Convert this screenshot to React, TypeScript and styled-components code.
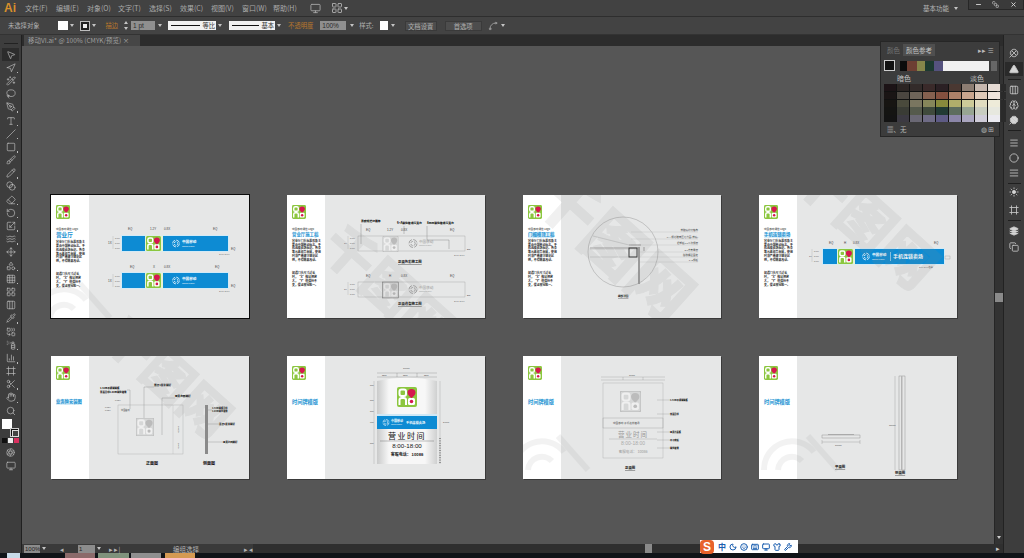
import React from "react";
import styled, { createGlobalStyle } from "styled-components";
import {
  MousePointer2, Navigation, Wand2, Lasso, PenTool, Type, Slash, Square, Brush, Pencil, Blend, Eraser,
  RotateCcw, Scaling, Waves, Move, Shapes, Grid3x3, LayoutGrid, Pipette, Combine, SprayCan, BarChart3,
  Frame, Scissors, Hand, Search, Aperture, Triangle, Columns3, Brain, Spline, Menu, Circle, Layers, Copy,
  Clover, Sun, AlignJustify, Minus, X, SquareStack, Monitor, Shirt, Wrench, Moon, Smile, Keyboard,
} from "lucide-react";

const GlobalStyle = createGlobalStyle`
  html, body { margin: 0; padding: 0; background: #333; }
  body { font-family: "Noto Sans CJK SC", "Liberation Sans", sans-serif; overflow: hidden; }
  * { box-sizing: border-box; }
`;

const Page = styled.div`
  position: relative;
  width: 1024px;
  height: 558px;
  display: flex;
  flex-direction: column;
  overflow: hidden;
  color: #b9b9b9;
  font-size: 6.3px;
`;

/* top menu */
const MenuBar = styled.div`
  height: 17px;
  flex: none;
  display: flex;
  align-items: center;
  padding-left: 4px;
  background: #424242;
  border-bottom: 1px solid #2e2e2e;
`;
const AiLogo = styled.div`
  width: 21px;
  font: bold 12px "Liberation Sans", sans-serif;
  color: #d8902c;
`;
const MenuItem = styled.span`
  width: 31px;
  font-size: 7px;
  white-space: nowrap;
  color: #a9a9a9;
`;
const MenuIcon = styled.div<{ $ml: number }>`
  margin-left: ${(p) => p.$ml}px;
  display: flex;
  align-items: center;
  color: #a5a5a5;
`;
const Workspace = styled.span`
  margin-left: auto;
  margin-right: 2px;
  font-size: 6.5px;
  color: #b5b5b5;
`;
const WinButtons = styled.div`
  margin-left: 10px;
  width: 56px;
  height: 10px;
  align-self: flex-start;
  display: flex;
  background: #3a3a3a;
  border: 1px solid #272727;
  border-top: 0;
`;
const WinButton = styled.div<{ $w: number }>`
  width: ${(p) => p.$w}px;
  display: flex;
  align-items: center;
  justify-content: center;
  color: #dcdcdc;
`;

/* control bar */
const ControlBar = styled.div`
  height: 18px;
  flex: none;
  display: flex;
  align-items: center;
  padding-left: 8px;
  background: #434343;
  border-bottom: 1px solid #333;
`;
const Ctl = styled.span<{ $ml?: number; $hot?: boolean }>`
  margin-left: ${(p) => p.$ml ?? 0}px;
  white-space: nowrap;
  color: ${(p) => (p.$hot ? "#b9772c" : "#b0b0b0")};
`;
const Swatch = styled.div<{ $ml: number; $w: number }>`
  margin-left: ${(p) => p.$ml}px;
  width: ${(p) => p.$w}px;
  height: 9px;
  background: #fff;
`;
const StrokeBox = styled.div<{ $ml: number }>`
  margin-left: ${(p) => p.$ml}px;
  width: 10px;
  height: 10px;
  background: #222;
  border: 1px solid #bdbdbd;
  display: flex;
  align-items: center;
  justify-content: center;
  &::after { content: ""; width: 4px; height: 4px; background: #eee; border: 1px solid #222; }
`;
const Arrow = styled.span<{ $ml: number }>`
  margin-left: ${(p) => p.$ml}px;
  width: 0;
  height: 0;
  border: 2px solid transparent;
  border-top: 3px solid #c4c4c4;
  border-bottom: 0;
  flex: none;
`;
const Spinner = styled.div<{ $ml: number }>`
  margin-left: ${(p) => p.$ml}px;
  width: 5px;
  height: 9px;
  display: flex;
  flex-direction: column;
  justify-content: space-between;
  align-items: center;
  &::before { content: ""; border: 2.5px solid transparent; border-bottom: 3px solid #c4c4c4; border-top: 0; }
  &::after { content: ""; border: 2.5px solid transparent; border-top: 3px solid #c4c4c4; border-bottom: 0; }
`;
const Field = styled.div<{ $ml: number; $w: number }>`
  margin-left: ${(p) => p.$ml}px;
  width: ${(p) => p.$w}px;
  height: 9px;
  padding-left: 2px;
  font: 6.5px/9px "Liberation Sans", sans-serif;
  background: #8f8f8f;
  color: #2b2b2b;
`;
const StrokeField = styled.div<{ $ml: number; $w: number }>`
  margin-left: ${(p) => p.$ml}px;
  width: ${(p) => p.$w}px;
  height: 9px;
  padding: 0 1px 0 3px;
  display: flex;
  align-items: center;
  gap: 2px;
  background: #f1f1f1;
  color: #333;
  &::before { content: ""; flex: 1; height: 1px; background: #111; }
`;
const CtlButton = styled.div<{ $ml: number; $w: number }>`
  margin-left: ${(p) => p.$ml}px;
  width: ${(p) => p.$w}px;
  height: 10px;
  line-height: 9px;
  text-align: center;
  background: #4d4d4d;
  border: 1px solid #3a3a3a;
  color: #b0b0b0;
`;
const Main = styled.div`
  position: relative;
  flex: 1;
  min-height: 0;
  display: flex;
  background: #2b2b2b;
`;

/* tools */
const ToolBar = styled.div`
  width: 22px;
  flex: none;
  padding-top: 13px;
  display: flex;
  flex-direction: column;
  align-items: center;
  background: #3d3d3d;
  border-right: 1px solid #202020;
`;
const ToolRule = styled.div`
  width: 14px;
  height: 1px;
  margin: -5px 0 4px;
  flex: none;
  background: #222;
`;
const Tool = styled.div<{ $more?: boolean; $on?: boolean }>`
  position: relative;
  width: 17px;
  height: 13.2px;
  flex: none;
  display: flex;
  align-items: center;
  justify-content: center;
  color: #c0c0c0;
  background: ${(p) => (p.$on ? "#2c2c2c" : "transparent")};
  &::after {
    content: "";
    display: ${(p) => (p.$more ? "block" : "none")};
    position: absolute;
    right: 1px;
    bottom: 1px;
    width: 1.5px;
    height: 1.5px;
    background: #bbb;
  }
`;
const FillStroke = styled.div`
  position: relative;
  width: 18px;
  height: 18px;
  margin-top: 2px;
  flex: none;
`;
const FillBox = styled.div`
  width: 10px;
  height: 10px;
  background: #fff;
`;
const StrokeOver = styled.div`
  position: absolute;
  right: 1px;
  bottom: 0;
  width: 9px;
  height: 9px;
  background: #111;
  border: 1px solid #ccc;
  &::after { content: ""; display: block; margin: 1px; width: 5px; height: 5px; background: #444; border: 1px solid #ddd; }
`;
const MiniRow = styled.div`
  display: flex;
  gap: 1px;
  margin-top: 1px;
  margin-bottom: 3px;
  flex: none;
`;
const Mini = styled.div<{ $c: string }>`
  width: 5px;
  height: 5px;
  background: ${(p) => p.$c};
`;

const Center = styled.div`
  flex: 1;
  min-width: 0;
  display: flex;
  flex-direction: column;
`;
const TabRow = styled.div`
  height: 11px;
  flex: none;
  display: flex;
  padding-left: 2px;
  background: #2c2c2c;
`;
const DocTab = styled.div`
  width: 116px;
  padding-left: 4px;
  font-size: 6.5px;
  line-height: 11px;
  white-space: nowrap;
  background: #464646;
  color: #a0a0a0;
`;
const CanvasRow = styled.div`
  height: 498px;
  flex: none;
  display: flex;
`;
const Canvas = styled.div`
  position: relative;
  flex: 1;
  padding: 149px 0 0 29px;
  display: grid;
  grid-template-columns: repeat(4, 198px);
  grid-template-rows: repeat(2, 123px);
  column-gap: 38px;
  row-gap: 38px;
  background: #565656;
  overflow: hidden;
`;
const VScroll = styled.div`
  position: relative;
  width: 9px;
  flex: none;
  background: #333;
  border-left: 1px solid #262626;
`;
const VThumb = styled.div`
  position: absolute;
  top: 247px;
  left: 0;
  width: 8px;
  height: 9px;
  background: #8a8a8a;
`;
const VArrow = styled.div`
  position: absolute;
  left: 2px;
  bottom: 5px;
  border: 2px solid transparent;
  border-top: 3px solid #ccc;
  border-bottom: 0;
`;
const StatusBar = styled.div`
  height: 9px;
  flex: none;
  display: flex;
  align-items: center;
  background: #3a3a3a;
  font-size: 6.5px;
`;
const StatusField = styled.div<{ $ml: number; $w: number }>`
  margin-left: ${(p) => p.$ml}px;
  width: ${(p) => p.$w}px;
  height: 8px;
  padding-left: 1px;
  font: 6px/8px "Liberation Sans", sans-serif;
  background: #8c8c8c;
  color: #222;
`;
const StatusText = styled.span<{ $ml: number; $w: number }>`
  margin-left: ${(p) => p.$ml}px;
  width: ${(p) => p.$w}px;
  flex: none;
  white-space: nowrap;
  color: #b5b5b5;
`;
const HScroll = styled.div`
  position: relative;
  flex: 1;
  height: 9px;
  background: #2f2f2f;
  color: #ccc;
  line-height: 9px;
  text-align: right;
  padding-right: 3px;
`;
const HThumb = styled.div`
  position: absolute;
  left: 392px;
  top: 0;
  width: 7px;
  height: 9px;
  background: #8a8a8a;
`;

/* dock */
const Dock = styled.div`
  width: 21px;
  flex: none;
  padding-top: 11px;
  display: flex;
  flex-direction: column;
  align-items: center;
  background: #3d3d3d;
  border-left: 1px solid #222;
`;
const DockIcon = styled.div<{ $mt?: number; $on?: boolean }>`
  margin-top: ${(p) => p.$mt ?? 0}px;
  width: 18px;
  height: 14px;
  flex: none;
  display: flex;
  align-items: center;
  justify-content: center;
  color: #c8c8c8;
  background: ${(p) => (p.$on ? "#2a2a2a" : "transparent")};
`;
const DockRule = styled.div`
  margin-top: 3px;
  width: 13px;
  height: 1px;
  flex: none;
  background: #1f1f1f;
`;

/* colour guide panel */
const Panel = styled.div`
  position: absolute;
  top: 6px;
  right: 24px;
  width: 120px;
  height: 96px;
  padding: 2px 2px 0 3px;
  display: flex;
  flex-direction: column;
  background: #3c3c3c;
  border: 1px solid #262626;
`;
const PanelTabs = styled.div`
  height: 12px;
  flex: none;
  display: flex;
  align-items: center;
  font-size: 6.5px;
  color: #777;
`;
const PanelTab = styled.div<{ $on?: boolean }>`
  padding: 0 3px;
  height: 12px;
  line-height: 12px;
  background: ${(p) => (p.$on ? "#4f4f4f" : "transparent")};
  color: ${(p) => (p.$on ? "#c6c6c6" : "#767676")};
`;
const PanelRight = styled.span`
  margin-left: auto;
  margin-right: 3px;
  color: #bbb;
`;
const GuideRow = styled.div`
  margin-top: 3px;
  height: 13px;
  flex: none;
  display: flex;
  align-items: center;
`;
const BaseSwatch = styled.div`
  width: 11px;
  height: 11px;
  background: #111;
  border: 1px solid #ccc;
`;
const GuideBar = styled.div`
  margin-left: 5px;
  width: 92px;
  height: 10px;
  display: flex;
  background: #f1f1f1;
`;
const GuideCell = styled.div<{ $c: string; $w: number }>`
  width: ${(p) => p.$w}px;
  background: ${(p) => p.$c};
`;
const GuideMenu = styled.div`
  margin-left: 2px;
  width: 6px;
  height: 10px;
  background: #666;
`;
const ShadeLabels = styled.div`
  height: 12px;
  flex: none;
  font-size: 7px;
  padding: 0 13px 0 13px;
  display: flex;
  align-items: center;
  justify-content: space-between;
  color: #c4c4c4;
`;
const ShadeGrid = styled.div`
  display: grid;
  grid-template-columns: repeat(9, 12.4px) 5px;
  grid-auto-rows: 7.2px;
  gap: 0.6px;
  background: #111;
  flex: none;
`;
const Shade = styled.div<{ $c: string }>`
  background: ${(p) => p.$c};
`;
const PanelFoot = styled.div`
  flex: 1;
  padding: 0 3px;
  display: flex;
  align-items: center;
  justify-content: space-between;
  font-size: 6.5px;
  color: #b5b5b5;
`;

/* artboards */
const Board = styled.div<{ $picked?: boolean }>`
  display: flex;
  overflow: hidden;
  background: #e6e7e7;
  box-shadow: ${(p) => (p.$picked ? "0 0 0 1px #0a0a0a" : "1px 1px 0 #3a3a3a")};
`;
const Side = styled.div`
  width: 38px;
  flex: none;
  padding: 10px 3px 0 5px;
  background: #fff;
`;
const SideLogo = styled.div`
  height: 14px;
  margin-bottom: 9px;
`;
const Eyebrow = styled.div`
  font-size: 2.6px;
  line-height: 3px;
  color: #222;
  white-space: nowrap;
`;
const BoardTitle = styled.div<{ $size: number; $gap?: number; $mark?: boolean }>`
  display: table;
  margin-top: ${(p) => p.$gap ?? 1}px;
  font-size: ${(p) => p.$size}px;
  line-height: ${(p) => p.$size + 1.2}px;
  font-weight: 700;
  color: #1b92d2;
  white-space: nowrap;
  background: ${(p) => (p.$mark ? "#d9eef9" : "transparent")};
`;
const Para = styled.p`
  margin: 2px 0 9px;
  font-size: 2.9px;
  line-height: 3.9px;
  font-weight: 700;
  color: #222;
`;
const Plot = styled.svg`
  flex: 1;
  min-width: 0;
  height: 123px;
  display: block;
`;
const Dim = styled.text<{ $s?: number }>`
  font-family: "Liberation Sans", "Noto Sans CJK SC", sans-serif;
  font-size: ${(p) => p.$s ?? 3}px;
  fill: #444;
`;
const Callout = styled.text<{ $s?: number }>`
  font-family: "Noto Sans CJK SC", sans-serif;
  font-size: ${(p) => p.$s ?? 3}px;
  font-weight: 900;
  fill: #111;
`;
const Caption = styled.text<{ $s?: number; $plain?: boolean }>`
  font-family: "Noto Sans CJK SC", sans-serif;
  font-size: ${(p) => p.$s ?? 4}px;
  font-weight: 700;
  fill: #111;
  text-decoration: ${(p) => (p.$plain ? "none" : "underline")};
`;
const Overlay = styled.svg`
  position: absolute;
  inset: 0;
  width: 100%;
  height: 100%;
  pointer-events: none;
`;
const Mark = styled.text<{ $s: number }>`
  font-family: "Noto Sans CJK SC", sans-serif;
  font-size: ${(p) => p.$s}px;
  font-weight: 900;
  fill: #8c8c8c;
  stroke: #8c8c8c;
  stroke-width: 1;
  opacity: 0.13;
`;

/* bottom */
const TaskBar = styled.div`
  height: 5px;
  flex: none;
  display: flex;
  background: #101418;
`;
const TaskThumb = styled.div<{ $ml: number; $w: number; $c: string }>`
  margin-left: ${(p) => p.$ml}px;
  width: ${(p) => p.$w}px;
  background: ${(p) => p.$c};
`;
const Ime = styled.div`
  position: absolute;
  left: 700px;
  bottom: 5px;
  width: 98px;
  height: 13px;
  display: flex;
  align-items: center;
  gap: 3px;
  padding-right: 2px;
  background: #fff;
  color: #1c5fb0;
  font-size: 8px;
  font-weight: 700;
`;
const ImeLogo = styled.div`
  width: 14px;
  height: 14px;
  margin-right: 1px;
  flex: none;
  text-align: center;
  font: bold 12px/14px "Liberation Sans", sans-serif;
  color: #fff;
  background: #e8622a;
  border-radius: 4px;
`;

const S = 10;
const toolsTop = [
  [MousePointer2, 0, 1], [Navigation, 1], [Wand2], [Lasso], [PenTool, 1], [Type, 1], [Slash, 1], [Square, 1],
  [Brush], [Pencil, 1], [Blend], [Eraser, 1], [RotateCcw, 1], [Scaling, 1], [Waves, 1], [Move], [Shapes, 1],
  [Grid3x3, 1], [LayoutGrid], [Columns3], [Pipette, 1], [Combine], [SprayCan, 1], [BarChart3, 1], [Frame],
  [Scissors, 1], [Hand, 1], [Search],
] as [React.ComponentType<{ size: number; strokeWidth: number }>, number?, number?][];

const menus = ["文件(F)", "编辑(E)", "对象(O)", "文字(T)", "选择(S)", "效果(C)", "视图(V)", "窗口(W)", "帮助(H)"];

const shades = [
  ["#1c1316", "#2b2523", "#332b2a", "#3a2a2a", "#2b2024", "#4a3832", "#8d7d72", "#c7b7ae", "#e6dbd4", "#2a2a2a"],
  ["#1a1515", "#4b4640", "#6f6459", "#85604f", "#84503f", "#ad8169", "#c9a58e", "#dfc9b8", "#efe4dc", "#2a2a2a"],
  ["#171512", "#4a4a3c", "#7a7660", "#86865a", "#888a3c", "#b0ae6b", "#cdcb99", "#e0dcc0", "#eeebd9", "#2a2a2a"],
  ["#141412", "#3a3c35", "#555a4c", "#3f4a3c", "#213a33", "#5d6d5e", "#97a592", "#c8cdc0", "#e7e8df", "#2a2a2a"],
  ["#131313", "#3c3a42", "#6a6874", "#6f6c86", "#5e5b85", "#8b86a8", "#aaa6bf", "#cfccd8", "#ecebf0", "#2a2a2a"],
];

const guide = [
  ["#0c0c0c", 7], ["#6d3f33", 10], ["#85864a", 8], ["#1d3a30", 9], ["#55527e", 9],
] as [string, number][];

// green brand tile, mono = the grey outline version on the construction boards
function Logo(props: { x?: number; y?: number; size: number; mono?: boolean }) {
  const { x = 0, y = 0, size, mono } = props;
  const bg = mono ? "#d6d7d7" : "#8cc63f";
  const red = mono ? "#bcbcbc" : "#d6174f";
  const fg = mono ? "#efefef" : "#fff";
  return (
    <svg x={x} y={y} width={size} height={size} viewBox="0 0 40 40" display="block">
      <rect width="40" height="40" rx="4" fill={bg} stroke={mono ? "#999" : "none"} />
      <rect x="5" y="5" width="13" height="13" rx="4" fill="none" stroke={fg} strokeWidth="4" />
      <path d="M29 4c5 0 8 3 8 7 0 5-5 8-8 12-3-4-8-7-8-12 0-4 3-7 8-7z" fill={red} />
      <path d="M5 36V26q0-4 5-4h3q5 0 5 4v10" fill="none" stroke={fg} strokeWidth="4" />
      <rect x="22" y="22" width="14" height="14" rx="3" fill={fg} />
      <circle cx="29" cy="29" r="3.5" fill={red} />
    </svg>
  );
}

function MobileMark(props: { x: number; y: number; r: number; c?: string }) {
  const { x, y, r, c = "#fff" } = props;
  return (
    <g fill="none" stroke={c} strokeWidth={r * 0.22}>
      <circle cx={x} cy={y} r={r} strokeDasharray={`${r * 1.2} ${r * 0.35}`} />
      <circle cx={x} cy={y} r={r * 0.55} strokeDasharray={`${r * 0.6} ${r * 0.25}`} />
    </g>
  );
}

function BlueBar(props: { x: number; y: number; w: number; h: number; logoX: number; markX: number; wide?: boolean }) {
  const { x, y, w, h, logoX, markX, wide } = props;
  return (
    <g>
      <rect x={x - 1} y={y - 1} width={w + 2} height={h + 2} fill="#d3eaf6" />
      <rect x={x} y={y} width={w} height={h} fill="#0d8bd3" />
      <rect x={logoX - 1} y={y - 0.5} width="18" height={h + 1} fill="#e9f3d5" />
      <Logo x={logoX} y={y} size={h} />
      <MobileMark x={markX} y={y + h / 2} r={3.4} />
      <text x={markX + 6} y={y + h / 2 - 0.2} fontSize="3.6" fontWeight="700" fill="#fff" fontFamily="Noto Sans CJK SC">中国移动</text>
      <text x={markX + 6} y={y + h / 2 + 3} fontSize="2.2" fill="#fff" fontFamily="Liberation Sans">China Mobile</text>
      {wide && <rect x={markX + 24} y={y + 3} width="0.5" height={h - 6} fill="#fff" />}
      {wide && <text x={markX + 27} y={y + h / 2 + 1.5} fontSize="5" fontWeight="700" fill="#fff" fontFamily="Noto Sans CJK SC">手机连锁卖场</text>}
    </g>
  );
}

function SizeMarks(props: { x: number; y: number; labels: string[]; step: number }) {
  return (
    <g>
      {props.labels.map((t, i) => (
        <Dim key={i} x={props.x} y={props.y + i * props.step} $s={2.4}>{t}</Dim>
      ))}
      <line x1={props.x - 2} x2={props.x - 2} y1={props.y - 3} y2={props.y + props.step * (props.labels.length - 1)} stroke="#888" strokeWidth="0.25" />
    </g>
  );
}

function Hall() {
  return (
    <Plot viewBox="38 0 160 123">
      <Dim x="77" y="35">EQ</Dim><Dim x="99" y="35">1.2Y</Dim><Dim x="113" y="35">0.8X</Dim><Dim x="162" y="35">EQ</Dim>
      <SizeMarks x="64" y={44} labels={["0.6X", "0.6X", "0.6X"]} step={5} />
      <Dim x="57" y="49">1X</Dim>
      <BlueBar x={71} y={41} w={106} h={15} logoX={95} markX={125} />
      <Dim x="180" y="55">EQ</Dim><Dim x="168" y="60" $s={2.4}>1/4X 1/4X</Dim>
      <Dim x="79" y="73">EQ</Dim><Dim x="102" y="73">X</Dim><Dim x="113" y="73">0.8X</Dim><Dim x="164" y="73">EQ</Dim>
      <SizeMarks x="64" y={82} labels={["0.6X", "0.6X", "0.6X"]} step={5} />
      <Dim x="57" y="87">1X</Dim>
      <BlueBar x={71} y={78} w={106} h={15} logoX={95} markX={125} />
      <Dim x="180" y="92">EQ</Dim><Dim x="168" y="97" $s={2.4}>1/4X 1/4X</Dim>
    </Plot>
  );
}

function HallBuild() {
  const strip = (y: number, framed?: boolean) => (
    <g>
      <rect x="71" y={y} width="107" height="15" fill="none" stroke="#8a8a8a" strokeWidth="0.3" />
      <Logo x={95.5} y={y} size={16} mono />
      {framed && <rect x="95.5" y={y} width="16" height="16" fill="none" stroke="#555" strokeWidth="0.4" />}
      <MobileMark x={126} y={y + 7.5} r={4} c="#9a9a9a" />
      <text x="132" y={y + 7} fontSize="3.6" fontFamily="Noto Sans CJK SC" fill="#9a9a9a">中国移动</text>
      <text x="132" y={y + 10} fontSize="2.2" fontFamily="Liberation Sans" fill="#9a9a9a">China Mobile</text>
      <SizeMarks x="63" y={y + 3} labels={["0.6X", "0.6X", "0.6X"]} step={5} />
      <Dim x="57" y={y + 8} $s={2.4}>1X</Dim>
      <Dim x="180" y={y + 14} $s={2.4}>EQ</Dim>
      <Dim x="167" y={y + 20} $s={2.4}>1/4X 1/4X</Dim>
    </g>
  );
  return (
    <Plot viewBox="38 0 160 123">
      <Callout x="74" y="27" $s={2.8}>背胶喷绘灯箱布</Callout>
      <Callout x="110" y="29" $s={2.8}>6+A钢化玻璃压克力</Callout>
      <Callout x="140" y="29" $s={2.8}>8mm钢化玻璃压克力</Callout>
      <path d="M74 29v20M117 31v8M140 31v14h22v9" fill="none" stroke="#555" strokeWidth="0.3" />
      <Dim x="79" y="36">EQ</Dim><Dim x="100" y="36">1.2Y</Dim><Dim x="114" y="36">0.8X</Dim><Dim x="163" y="36">EQ</Dim>
      {strip(41)}
      <Caption x="111" y="68" $s={3.4}>正面色彩施工图</Caption>
      <Dim x="79" y="82">EQ</Dim><Dim x="102" y="82">H</Dim><Dim x="114" y="82">0.8X</Dim><Dim x="163" y="82">EQ</Dim>
      {strip(87, true)}
      <Caption x="111" y="110" $s={3.4}>正面造型施工图</Caption>
    </Plot>
  );
}

function HeadDetail() {
  const notes = ["背胶喷绘灯箱布", "6+A钢化玻璃压克力面(背喷)", "铝塑板1:1二次钢架", "2.0方管骨架", "膨胀螺丝固定", "1+2钢板"];
  const ys = [36, 43, 49, 56, 61, 66];
  return (
    <Plot viewBox="38 0 160 123">
      <circle cx="100" cy="57" r="35" fill="none" stroke="#666" strokeWidth="0.3" />
      <path d="M70 41 106 50M67 54H116M67 62H114" fill="none" stroke="#888" strokeWidth="0.3" />
      <rect x="67" y="52" width="48" height="2" fill="#c4c4c4" />
      <rect x="106" y="53" width="8" height="9" fill="none" stroke="#222" strokeWidth="0.9" />
      <rect x="115" y="52" width="2" height="37" fill="#9a9a9a" />
      <path d="M106 50h12M121 52v4" stroke="#333" strokeWidth="0.4" />
      {notes.map((n, i) => (
        <g key={n}>
          <line x1={i < 3 ? 108 : 116} x2="175" y1={ys[i] + 1} y2={ys[i] + 1} stroke="#999" strokeWidth="0.2" />
          <Dim x="175" y={ys[i]} textAnchor="end" $s={2.5}>{n}</Dim>
        </g>
      ))}
      <Caption x="95" y="102" $s={2.6}>细部详图</Caption>
    </Plot>
  );
}

function PhoneShop() {
  return (
    <Plot viewBox="38 0 160 123">
      <Dim x="70" y="49">EQ</Dim><Dim x="85" y="49">H</Dim><Dim x="94" y="49">0.8X</Dim><Dim x="175" y="49">EQ</Dim>
      <SizeMarks x="55" y={57} labels={["0.6X", "0.6X", "0.6X"]} step={5} />
      <Dim x="50" y="62" $s={2.4}>1X</Dim>
      <BlueBar x={64} y={54} w={121} h={15} logoX={79} markX={107} wide />
      <Dim x="160" y="73" $s={2.2}>1/4X  1/4X色条</Dim>
      <rect x="186" y="61" width="5" height="3" fill="none" stroke="#888" strokeWidth="0.3" />
    </Plot>
  );
}

function SignFront() {
  return (
    <Plot viewBox="38 0 160 123">
      <Callout x="49" y="33" $s={2.4}>1.5cm不锈钢钢板</Callout>
      <Callout x="49" y="37" $s={2.4}>背面丝印1.0cm钢化玻璃</Callout>
      <Callout x="103" y="30" $s={2.6}>直径1厘米钢钉</Callout>
      <Callout x="124" y="41" $s={2.6}>亚克力四脚钉</Callout>
      <path d="M76 34h3v19M93 31h10M93 31v36M111 42h13M111 42v37" fill="none" stroke="#555" strokeWidth="0.25" />
      <Dim x="64" y="45" $s={2.2}>0.05X</Dim><Dim x="54" y="52" $s={2.2}>0.05X</Dim><Dim x="54" y="55" $s={2.2}>0.05X</Dim>
      <rect x="67" y="49" width="65" height="49" fill="none" stroke="#999" strokeWidth="0.3" />
      <line x1="122" x2="122" y1="49" y2="98" stroke="#999" strokeWidth="0.25" />
      <Logo x={85} y={62} size={18} mono />
      <Dim x="70" y="55" $s={2.2}>中国移动</Dim>
      <Dim x="127" y="70" transform="rotate(90 127 70)" $s={2.2}>100cm</Dim>
      <Dim x="127" y="87" transform="rotate(90 127 87)" $s={2.2}>50cm</Dim>
      <rect x="154" y="49" width="3" height="49" fill="#8a8a8a" />
      <Callout x="161" y="53" $s={2.2}>1.5cm钢板丝印</Callout>
      <Callout x="161" y="56" $s={2.2}>1.0cm钢化玻璃</Callout>
      <Callout x="168" y="69" $s={2.4}>直径1厘米钢钉</Callout>
      <Callout x="172" y="87" $s={2.4}>亚克力四脚钉</Callout>
      <path d="M157 54h4M157 68h11M157 86h15" stroke="#555" strokeWidth="0.25" />
      <Caption x="95" y="109" $plain>正面图</Caption>
      <Caption x="152" y="109" $plain>侧面图</Caption>
    </Plot>
  );
}

function HoursPlate() {
  return (
    <Plot viewBox="38 0 160 123">
      <defs>
        <linearGradient id="plate" x1="0" x2="1" y1="0" y2="0">
          <stop offset="0" stopColor="#c9caca" />
          <stop offset="0.2" stopColor="#f7f7f7" />
          <stop offset="0.8" stopColor="#f7f7f7" />
          <stop offset="1" stopColor="#cfd0d0" />
        </linearGradient>
      </defs>
      <path d="M90 25q30-7 60 0v83H90z" fill="url(#plate)" />
      <Dim x="116" y="13" $s={2.2}>100cm</Dim>
      <path d="M90 17H150M90 21H150M110 17v4M130 17v4" stroke="#555" strokeWidth="0.25" />
      <Dim x="95" y="20" $s={1.9}>33cm</Dim><Dim x="116" y="20" $s={1.9}>33cm</Dim><Dim x="137" y="20" $s={1.9}>33cm</Dim>
      <line x1="87" x2="87" y1="25" y2="108" stroke="#777" strokeWidth="0.25" />
      <line x1="153" x2="153" y1="25" y2="108" stroke="#777" strokeWidth="0.25" />
      <Logo x={110} y={31} size={20} />
      <rect x="90" y="60" width="60" height="13" fill="#0d8bd3" />
      <rect x="90" y="58" width="60" height="2" fill="#cfe8f6" />
      <MobileMark x={99} y={66.5} r={3} />
      <text x="104" y="66" fontSize="3" fontWeight="700" fill="#fff" fontFamily="Noto Sans CJK SC">中国移动</text>
      <text x="104" y="69" fontSize="1.9" fill="#fff" fontFamily="Liberation Sans">China Mobile</text>
      <text x="119" y="68" fontSize="3.2" fontWeight="700" fill="#fff" fontFamily="Noto Sans CJK SC">手机连锁卖场</text>
      <text x="120" y="83" textAnchor="middle" fontSize="8" letterSpacing="1.5" fill="#111" fontFamily="Noto Sans CJK SC">营业时间</text>
      <line x1="93" x2="147" y1="85" y2="85" stroke="#333" strokeWidth="0.3" />
      <text x="120" y="92" textAnchor="middle" fontSize="6.2" fill="#111" fontFamily="Liberation Sans">8:00-18:00</text>
      <text x="120" y="100" textAnchor="middle" fontSize="4" fontWeight="700" fill="#222" fontFamily="Noto Sans CJK SC">客服电话： 10086</text>
      <Dim x="83" y="30" $s={1.9}>8cm</Dim><Dim x="83" y="45" $s={1.9}>8cm</Dim>
      <Dim x="83" y="56" $s={1.9}>8cm</Dim><Dim x="83" y="67" $s={1.9}>6cm</Dim><Dim x="83" y="88" $s={1.9}>8cm</Dim>
      <Dim x="156" y="67" $s={2.2}>3.0cm</Dim>
      <line x1="153" x2="153" y1="82" y2="108" stroke="#111" strokeWidth="0.7" strokeDasharray="1 1.4" />
    </Plot>
  );
}

function PlateBuild() {
  const notes = [["1.5cm不锈钢钢板", 44], ["背面丝印", 58], ["亚克力面板", 76], ["不干胶贴", 84], ["钢化玻璃", 92]] as [string, number][];
  return (
    <Plot viewBox="38 0 160 123">
      <rect x="80" y="27" width="60" height="75" fill="none" stroke="#999" strokeWidth="0.3" />
      <path d="M78 24h64M78 21h64M100 21v3M120 21v3" stroke="#777" strokeWidth="0.25" />
      <Dim x="106" y="20" $s={2}>100cm</Dim>
      <Logo x={97} y={35} size={21} mono />
      <rect x="80" y="62" width="60" height="10" fill="none" stroke="#888" strokeWidth="0.3" />
      <Dim x="90" y="68" $s={2.6}>中国移动  手机连锁卖场</Dim>
      <text x="110" y="81" textAnchor="middle" fontSize="6.5" letterSpacing="1" fill="#999" fontFamily="Noto Sans CJK SC">营业时间</text>
      <line x1="86" x2="134" y1="83" y2="83" stroke="#777" strokeWidth="0.25" />
      <text x="110" y="89" textAnchor="middle" fontSize="5" fill="#aaa" fontFamily="Liberation Sans">8:00-18:00</text>
      <text x="110" y="97" textAnchor="middle" fontSize="3.6" fill="#999" fontFamily="Noto Sans CJK SC">客服电话： 10086</text>
      {notes.map(([n, y]) => (
        <g key={n}>
          <line x1="134" x2="147" y1={y} y2={y} stroke="#777" strokeWidth="0.25" />
          <Callout x="147" y={y + 1} $s={2.2}>{n}</Callout>
        </g>
      ))}
      <Caption x="102" y="113" $s={3.4}>正面图</Caption>
    </Plot>
  );
}

function PlateSide() {
  return (
    <Plot viewBox="38 0 160 123">
      <rect x="63" y="79" width="38" height="3" fill="none" stroke="#666" strokeWidth="0.3" />
      <rect x="69" y="78" width="26" height="1" fill="#aaa" />
      <path d="M63 86H101M63 84v4M101 84v4" stroke="#666" strokeWidth="0.25" />
      <Dim x="76" y="90" $s={2.2}>100cm</Dim>
      <Caption x="76" y="112" $s={3.4}>平面图</Caption>
      <rect x="140" y="20" width="6" height="94" fill="none" stroke="#666" strokeWidth="0.3" />
      <rect x="142" y="20" width="1.5" height="94" fill="#b5b5b5" />
      <line x1="136" x2="136" y1="20" y2="114" stroke="#666" strokeWidth="0.25" />
      <Dim x="130" y="70" $s={2.2}>150cm</Dim>
      <Caption x="136" y="118" $s={3.4}>侧面图</Caption>
    </Plot>
  );
}

const watermarkClip = [51, 287, 523, 759].flatMap((x) => [195, 356].map((y) => ({ x, y })));

// big diagonal site stamps printed across the boards
function Watermark() {
  return (
    <Overlay viewBox="22 46 972 498">
      <defs>
        <clipPath id="boards">
          {watermarkClip.map((b) => <rect key={`${b.x}-${b.y}`} x={b.x} y={b.y} width="198" height="123" />)}
        </clipPath>
      </defs>
      <g clipPath="url(#boards)">
        <Mark x="318" y="250" $s={52} transform="rotate(42 318 250)">千图网</Mark>
        <Mark x="530" y="200" $s={62} transform="rotate(42 530 200)">千图网</Mark>
        <Mark x="790" y="180" $s={56} transform="rotate(42 790 180)">千图网</Mark>
        <Mark x="100" y="340" $s={50} transform="rotate(42 100 340)">千图网</Mark>
        {[[62, 318], [540, 470], [790, 470]].map(([x, y]) => (
          <g key={x} fill="none" stroke="#8c8c8c" strokeWidth="6" opacity="0.11">
            <path d={`M${x - 26} ${y}a28 28 0 0 1 50-18`} />
            <path d={`M${x - 12} ${y}a14 14 0 0 1 24-9`} />
            <path d={`M${x + 18} ${y - 34}l30 34`} />
          </g>
        ))}
      </g>
    </Overlay>
  );
}

const boards = [
  { title: "营业厅", size: 5.6, paras: true, Draw: Hall, picked: true },
  { title: "营业厅施工稿", size: 4.4, paras: true, Draw: HallBuild },
  { title: "门楣横顶工稿", size: 4.4, paras: true, Draw: HeadDetail, mark: true },
  { title: "手机连锁卖场", size: 4.4, paras: true, Draw: PhoneShop, mark: true },
  { title: "业务牌安装图", size: 4.3, Draw: SignFront, mark: true },
  { title: "时间牌模版", size: 5.2, Draw: HoursPlate },
  { title: "时间牌模版", size: 5.2, Draw: PlateBuild },
  { title: "时间牌模版", size: 5.2, Draw: PlateSide },
];

export default function App() {
  return (
    <Page>
      <GlobalStyle />
      <MenuBar>
        <AiLogo>Ai</AiLogo>
        {menus.map((m) => <MenuItem key={m}>{m}</MenuItem>)}
        <MenuIcon $ml={6}><Monitor size={11} strokeWidth={2} /></MenuIcon>
        <MenuIcon $ml={10}><LayoutGrid size={12} strokeWidth={2} /></MenuIcon>
        <Arrow $ml={1} />
        <Workspace>基本功能</Workspace>
        <Arrow $ml={3} />
        <WinButtons>
          <WinButton $w={18}><Minus size={7} strokeWidth={3} /></WinButton>
          <WinButton $w={16}><SquareStack size={7} strokeWidth={2} /></WinButton>
          <WinButton $w={20}><X size={7} strokeWidth={3} /></WinButton>
        </WinButtons>
      </MenuBar>

      <ControlBar>
        <Ctl>未选择对象</Ctl>
        <Swatch $ml={19} $w={10} />
        <Arrow $ml={2} />
        <StrokeBox $ml={6} />
        <Arrow $ml={2} />
        <Ctl $ml={9} $hot>描边</Ctl>
        <Spinner $ml={5} />
        <Field $ml={3} $w={24}>1 pt</Field>
        <Arrow $ml={3} />
        <StrokeField $ml={6} $w={48}>等比</StrokeField>
        <Arrow $ml={2} />
        <StrokeField $ml={7} $w={46}>基本</StrokeField>
        <Arrow $ml={2} />
        <Ctl $ml={7} $hot>不透明度</Ctl>
        <Field $ml={7} $w={26}>100%</Field>
        <Arrow $ml={4} />
        <Ctl $ml={5}>样式:</Ctl>
        <Swatch $ml={6} $w={8} />
        <Arrow $ml={3} />
        <CtlButton $ml={10} $w={32}>文档设置</CtlButton>
        <CtlButton $ml={8} $w={37}>首选项</CtlButton>
        <MenuIcon $ml={6}><Spline size={10} strokeWidth={2} /></MenuIcon>
        <Arrow $ml={3} />
      </ControlBar>

      <Main>
        <ToolBar>
          <ToolRule />
          {toolsTop.map(([Icon, more, on], i) => (
            <Tool key={i} $more={!!more} $on={!!on}><Icon size={S} strokeWidth={1.6} /></Tool>
          ))}
          <FillStroke>
            <FillBox />
            <StrokeOver />
          </FillStroke>
          <MiniRow>
            <Mini $c="#111" /><Mini $c="#eee" /><Mini $c="#d9305f" />
          </MiniRow>
          <Tool><Aperture size={9} strokeWidth={1.6} /></Tool>
          <Tool><Monitor size={10} strokeWidth={1.6} /></Tool>
        </ToolBar>

        <Center>
          <TabRow>
            <DocTab>移动VI.ai* @ 100% (CMYK/预览)  ×</DocTab>
          </TabRow>
          <CanvasRow>
            <Canvas>
              {boards.map((b, i) => (
                <Board key={i} $picked={b.picked}>
                  <Side>
                    <SideLogo><Logo size={14} /></SideLogo>
                    {b.paras ? (
                      <>
                        <Eyebrow>中国移动通信 Logo</Eyebrow>
                        <BoardTitle $size={b.size} $mark={b.mark}>{b.title}</BoardTitle>
                        <Para>
                          营业厅门头标准形象主要由中国移动标志、手机连锁卖场标识、色条等元素组合而成，使用时须严格遵守规范比例，不得随意改动。
                        </Para>
                        <Para>
                          如遇门头尺寸过长时，“X”按比例放大，“Y”值保持不变，保证视觉统一。
                        </Para>
                      </>
                    ) : (
                      <BoardTitle $size={b.size} $gap={19} $mark={b.mark}>{b.title}</BoardTitle>
                    )}
                  </Side>
                  <b.Draw />
                </Board>
              ))}
              <Watermark />
            </Canvas>
            <VScroll>
              <VThumb />
              <VArrow />
            </VScroll>
          </CanvasRow>
          <StatusBar>
            <StatusField $ml={2} $w={16}>100%</StatusField>
            <Arrow $ml={2} />
            <StatusText $ml={14} $w={4}>◂</StatusText>
            <StatusField $ml={14} $w={17}>1</StatusField>
            <Arrow $ml={2} />
            <StatusText $ml={8} $w={14}>▸ ▸|</StatusText>
            <StatusText $ml={50} $w={28}>编组选择</StatusText>
            <StatusText $ml={43} $w={9}>▸ ◂</StatusText>
            <HScroll><HThumb />▸</HScroll>
          </StatusBar>
        </Center>

        <Dock>
          <DockIcon><Clover size={10} strokeWidth={2} /></DockIcon>
          <DockIcon $mt={2} $on><Triangle size={10} strokeWidth={2} fill="#d5d5d5" /></DockIcon>
          <DockRule />
          <DockIcon $mt={3}><Columns3 size={10} strokeWidth={2} /></DockIcon>
          <DockIcon $mt={1}><Brain size={10} strokeWidth={2} /></DockIcon>
          <DockIcon $mt={1}><Clover size={10} strokeWidth={2} fill="#d5d5d5" /></DockIcon>
          <DockRule />
          <DockIcon $mt={5}><Menu size={10} strokeWidth={2} /></DockIcon>
          <DockIcon $mt={1}><Circle size={10} strokeWidth={2} /></DockIcon>
          <DockIcon $mt={1}><AlignJustify size={10} strokeWidth={2} /></DockIcon>
          <DockRule />
          <DockIcon $mt={1}><Sun size={10} strokeWidth={2} fill="#d5d5d5" /></DockIcon>
          <DockIcon $mt={4}><Frame size={10} strokeWidth={2} /></DockIcon>
          <DockRule />
          <DockIcon $mt={3}><Layers size={10} strokeWidth={2} fill="#d5d5d5" /></DockIcon>
          <DockIcon $mt={2}><Copy size={10} strokeWidth={2} /></DockIcon>
        </Dock>

        <Panel>
          <PanelTabs>
            <PanelTab>颜色</PanelTab>
            <PanelTab $on>颜色参考</PanelTab>
            <PanelRight>▸▸ ≡</PanelRight>
          </PanelTabs>
          <GuideRow>
            <BaseSwatch />
            <GuideBar>
              {guide.map(([c, w]) => <GuideCell key={c} $c={c} $w={w} />)}
            </GuideBar>
            <GuideMenu />
          </GuideRow>
          <ShadeLabels><span>暗色</span><span>淡色</span></ShadeLabels>
          <ShadeGrid>
            {shades.flat().map((c, i) => <Shade key={i} $c={c} />)}
          </ShadeGrid>
          <PanelFoot>
            <span>▦、无</span>
            <span>◍ ⊞</span>
          </PanelFoot>
        </Panel>
      </Main>

      <TaskBar>
        <TaskThumb $ml={7} $w={13} $c="#c8dbe8" />
        <TaskThumb $ml={45} $w={30} $c="#8b6a6a" />
        <TaskThumb $ml={3} $w={31} $c="#7f927c" />
        <TaskThumb $ml={2} $w={30} $c="#8f8f8f" />
        <TaskThumb $ml={4} $w={30} $c="#d59a52" />
      </TaskBar>

      <Ime>
        <ImeLogo>S</ImeLogo>
        <span>中</span>
        <Moon size={8} strokeWidth={3} />
        <Smile size={8} strokeWidth={3} />
        <Keyboard size={8} strokeWidth={3} />
        <Monitor size={8} strokeWidth={3} />
        <Shirt size={8} strokeWidth={3} />
        <Wrench size={8} strokeWidth={3} />
      </Ime>
    </Page>
  );
}
